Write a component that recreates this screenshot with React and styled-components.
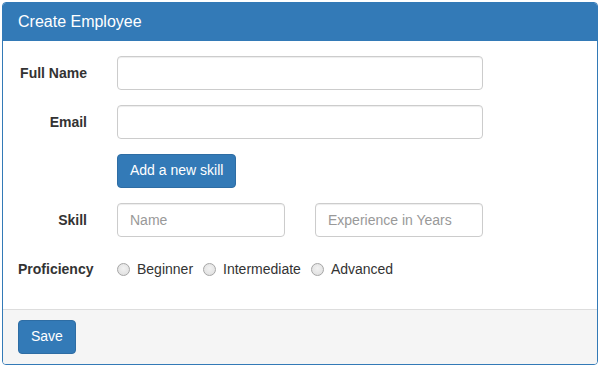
import React from "react"
import styled, { createGlobalStyle } from "styled-components"

const GlobalStyle = createGlobalStyle`
  body {
    margin: 0;
    font-family: "Liberation Sans", Arial, sans-serif;
    font-size: 14px;
    line-height: 1.42857;
    color: #333;
    background: #fff;
  }
  * { box-sizing: border-box; }
`

const Page = styled.div`
  padding: 2px;
`

const Panel = styled.div`
  width: 596px;
  border: 1px solid #337ab7;
  border-radius: 4px;
  background: #fff;
  overflow: hidden;
`

const Heading = styled.div`
  background: #337ab7;
  color: #fff;
  padding: 10px 15px 9px;
  border-bottom: 1px solid #337ab7;
`

const Title = styled.h3`
  margin: 0;
  font-size: 16px;
  font-weight: normal;
  line-height: 1.1;
`

const Body = styled.form`
  padding: 15px 15px 29px;
  display: flex;
  flex-direction: column;
  gap: 15px;
`

const Row = styled.div`
  display: grid;
  grid-template-columns: 69px 366px;
  column-gap: 30px;
`

const Label = styled.label`
  text-align: right;
  font-weight: bold;
  padding-top: 8px;
  white-space: nowrap;
`

const Pair = styled.div`
  display: grid;
  grid-template-columns: 168px 168px;
  column-gap: 30px;
`

const Input = styled.input`
  display: block;
  width: 100%;
  height: 34px;
  padding: 6px 12px;
  font: inherit;
  color: #555;
  background: #fff;
  border: 1px solid #ccc;
  border-radius: 4px;
  box-shadow: inset 0 1px 1px rgba(0, 0, 0, 0.075);
  &::placeholder { color: #999; }
`

const Button = styled.button`
  justify-self: start;
  height: 34px;
  padding: 6px 12px;
  font: inherit;
  color: #fff;
  background: #337ab7;
  border: 1px solid #2e6da4;
  border-radius: 4px;
`

const Radios = styled.div`
  display: flex;
  align-items: center;
  gap: 10px;
  padding-top: 8px;
  height: 28px;
`

const RadioLabel = styled.label`
  display: flex;
  align-items: center;
  gap: 7px;
`

const Radio = styled.input`
  appearance: none;
  margin: 0;
  width: 13px;
  height: 13px;
  border-radius: 50%;
  border: 1px solid #a6a6a6;
  background: radial-gradient(circle at 50% 40%, #f2f2f2 0%, #dcdcdc 100%);
`

const Footer = styled.div`
  padding: 10px 15px;
  background: #f5f5f5;
  border-top: 1px solid #ddd;
  display: flex;
`

const levels = ["Beginner", "Intermediate", "Advanced"]

const App = () => (
  <Page>
    <GlobalStyle />
    <Panel>
      <Heading>
        <Title>Create Employee</Title>
      </Heading>
      <Body onSubmit={e => e.preventDefault()}>
        <Row>
          <Label>Full Name</Label>
          <Input type="text" />
        </Row>
        <Row>
          <Label>Email</Label>
          <Input type="text" />
        </Row>
        <Row>
          <span />
          <Button type="button">Add a new skill</Button>
        </Row>
        <Row>
          <Label>Skill</Label>
          <Pair>
            <Input type="text" placeholder="Name" />
            <Input type="text" placeholder="Experience in Years" />
          </Pair>
        </Row>
        <Row>
          <Label>Proficiency</Label>
          <Radios>
            {levels.map(level => (
              <RadioLabel key={level}>
                <Radio type="radio" name="proficiency" value={level} />
                {level}
              </RadioLabel>
            ))}
          </Radios>
        </Row>
      </Body>
      <Footer>
        <Button type="button">Save</Button>
      </Footer>
    </Panel>
  </Page>
)

export default App
